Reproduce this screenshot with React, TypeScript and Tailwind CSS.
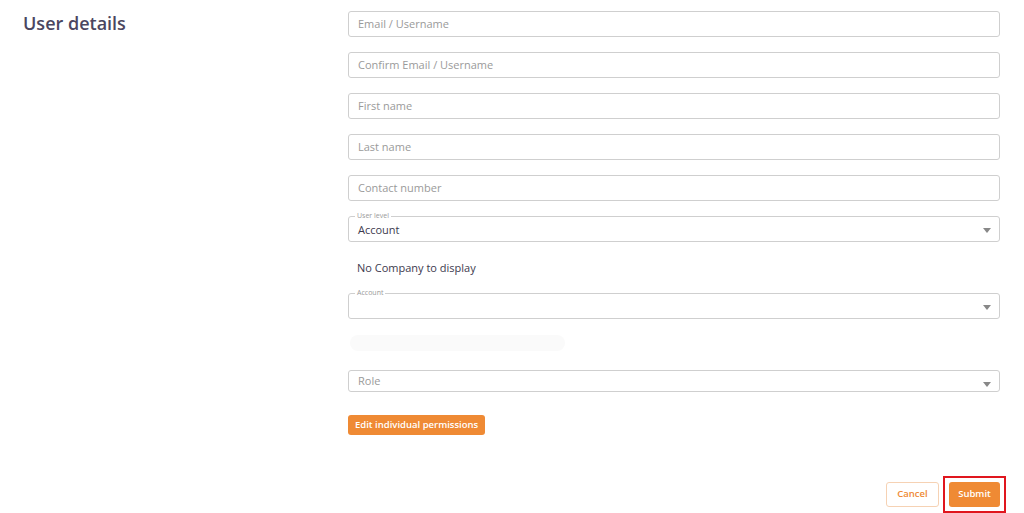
import React from "react";

const Chevron = () => (
  <svg width="8" height="5" viewBox="0 0 8 5" className="absolute right-[8px] top-[11px]"><path d="M0 0h8L4 5z" fill="#888" /></svg>
);

const Input = ({ ph }: { ph: string }) => (
  <div className="h-[26px] border border-[#cfcfcf] rounded-[3px] flex items-center px-[9px] text-[11px] text-[#9a9a9a]">{ph}</div>
);

const Legend = ({ label, value }: { label: string; value?: string }) => (
  <div className="relative h-[26px] border border-[#cfcfcf] rounded-[3px] flex items-center px-[9px] text-[11px] text-[#3d3a4e]">
    <span className="absolute -top-[6px] left-[6px] bg-white px-[2px] text-[7px] leading-[10px] text-[#9a9a9a]">{label}</span>
    <span className="pt-[2px]">{value}</span>
    <Chevron />
  </div>
);

export default function App() {
  return (
    <div className="w-[1024px] h-[513px] bg-white flex" style={{ fontFamily: '"Open Sans", sans-serif' }}>
      <div className="w-[348px] pl-[23px] pt-[10px]">
        <h1 className="text-[18px] font-semibold text-[#4b4660]">User details</h1>
      </div>
      <div className="w-[652px] flex flex-col pt-[11px]">
        <div className="flex flex-col gap-[15px]">
          <Input ph="Email / Username" />
          <Input ph="Confirm Email / Username" />
          <Input ph="First name" />
          <Input ph="Last name" />
          <Input ph="Contact number" />
          <Legend label="User level" value="Account" />
        </div>
        <div className="mt-[18px] pl-[9px] text-[11px] text-[#3d3a4e] h-[16px] leading-[16px]">No Company to display</div>
        <div className="mt-[17px]"><Legend label="Account" /></div>
        <div className="mt-[16px] ml-[2px] w-[215px] h-[19px] rounded-full bg-[#fafafa]" />
        <div className="mt-[19px] relative h-[26px] border border-[#cfcfcf] rounded-[3px] flex items-center px-[9px] text-[11px] text-[#9a9a9a]">Role<Chevron /></div>
        <div className="mt-[18px]">
          <button className="h-[20px] px-[7px] rounded-[3px] bg-[#ef8a34] text-white text-[9.5px] font-semibold">Edit individual permissions</button>
        </div>
        <div className="mt-[41px] flex justify-end items-center gap-[4px]">
          <button className="w-[53px] h-[25px] border border-[#f6d2b4] rounded-[3px] text-[#ef8a34] text-[9.5px] font-semibold">Cancel</button>
          <div className="border-2 border-[#e0161e] p-[4px] -mr-[6px]">
            <button className="w-[51px] h-[25px] rounded-[3px] bg-[#ef8a34] text-white text-[9.5px] font-semibold block">Submit</button>
          </div>
        </div>
      </div>
    </div>
  );
}
